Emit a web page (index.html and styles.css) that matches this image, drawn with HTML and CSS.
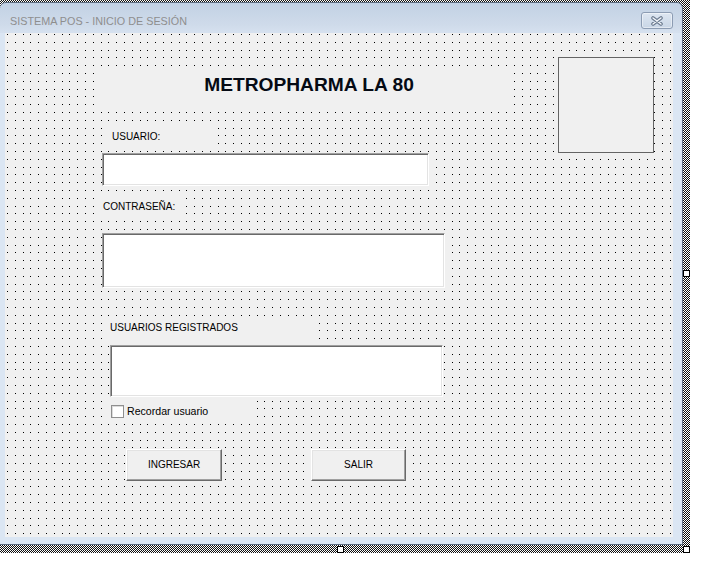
FILE: index.html
```html
<!DOCTYPE html>
<html lang="es">
<head>
<meta charset="utf-8">
<title>Sistema POS - Inicio de sesión</title>
<link rel="stylesheet" href="styles.css">
</head>
<body>
<div class="designer">
  <div class="window">
    <div class="titlebar">
      <span class="title">SISTEMA POS - INICIO DE SESIÓN</span>
      <span class="close">
        <svg width="14" height="10" viewBox="0 0 14 10">
          <path d="M3 2 L11 8 M11 2 L3 8" stroke="#6b7a8f" stroke-width="3.6" stroke-linecap="round" fill="none"/>
          <path d="M3 2 L11 8 M11 2 L3 8" stroke="#f4f7fb" stroke-width="1.4" stroke-linecap="round" fill="none"/>
        </svg>
      </span>
    </div>
    <div class="client">
      <div class="fields">
        <div class="lbl heading">METROPHARMA LA 80</div>
        <div class="lbl lbl-user">USUARIO:</div>
        <div class="textbox tb-user"></div>
        <div class="lbl lbl-pass">CONTRASEÑA:</div>
        <div class="textbox tb-pass"></div>
        <div class="lbl lbl-reg">USUARIOS REGISTRADOS</div>
        <div class="textbox tb-reg"></div>
        <div class="check">
          <span class="box"></span>
          <span class="check-text">Recordar usuario</span>
        </div>
        <div class="buttons">
          <div class="btn btn-in">INGRESAR</div>
          <div class="btn btn-out">SALIR</div>
        </div>
      </div>
      <div class="picture"></div>
    </div>
  </div>
  <span class="handle h-right"></span>
  <span class="handle h-bottom"></span>
  <span class="handle h-corner"></span>
</div>
</body>
</html>
```
FILE: styles.css
```css
html, body {
  margin: 0;
  padding: 0;
  background: #fff;
}

.designer {
  position: relative;
  width: 690px;
  height: 553px;
  box-sizing: border-box;
  padding-top: 2px;
  background-color: #fff;
  background-image: repeating-conic-gradient(#111 0 25%, #fff 0 50%);
  background-size: 2px 2px;
}

.window {
  width: 683px;
  height: 543px;
  box-sizing: border-box;
  border: 1px solid #5d6c80;
  border-left: none;
  border-radius: 6px 6px 0 0;
  background: linear-gradient(to bottom, #c2d1e4 0, #cfdbea 22px, #d6e1ef 30px, #dbe6f3 30px);
  display: flex;
  flex-direction: column;
  font-family: "Liberation Sans", Arial, sans-serif;
}

.titlebar {
  height: 30px;
  display: flex;
  justify-content: space-between;
  align-items: flex-start;
  padding: 0 9px 0 10px;
  box-sizing: border-box;
}

.title {
  padding-top: 12px;
  font-size: 10.8px;
  line-height: 13px;
  color: #8e8e8e;
}

.close {
  margin-top: 9px;
  width: 32px;
  height: 17px;
  box-sizing: border-box;
  border: 1px solid #8c9cb3;
  border-radius: 3px;
  background: linear-gradient(to bottom, #dde6f1, #c9d6e6);
  box-shadow: inset 0 0 0 1px rgba(255, 255, 255, 0.45);
  display: flex;
  align-items: center;
  justify-content: center;
}

.client {
  margin-left: 5px;
  width: 668px;
  height: 504px;
  display: flex;
  background-color: #f0f0f0;
  background-image:
    linear-gradient(to bottom, transparent 0 1px, #f0f0f0 1px 8px, transparent 8px 9px, #f0f0f0 9px 16px, transparent 16px 17px, #f0f0f0 17px 23px, transparent 23px 24px, #f0f0f0 24px 31px, transparent 31px 32px, #f0f0f0 32px 39px),
    linear-gradient(to right, #000 0 1px, transparent 1px 8px, #000 8px 9px, transparent 9px 16px, #000 16px 17px, transparent 17px 23px, #000 23px 24px, transparent 24px 31px, #000 31px 32px, transparent 32px 39px);
  background-size: 39px 39px;
  background-position: 2px 1px;
}

.fields {
  width: 553px;
  flex: none;
  display: flex;
  flex-direction: column;
  align-items: flex-start;
}

.lbl {
  background: #f0f0f0;
  font-size: 10px;
  line-height: 12px;
  color: #000;
  box-sizing: border-box;
  white-space: nowrap;
}

.heading {
  margin: 34px 0 0 95px;
  width: 410px;
  height: 43px;
  padding: 7px 0 0 8px;
  text-align: center;
  font-size: 19.2px;
  line-height: 22px;
  font-weight: bold;
  color: #050a14;
}

.lbl-user {
  margin: 15px 0 0 103px;
  width: 104px;
  height: 22px;
  padding: 6px 0 0 4px;
}

.lbl-pass {
  margin: 11px 0 0 95px;
  width: 86px;
  height: 21px;
  padding: 4px 0 0 3px;
}

.lbl-reg {
  margin: 28px 0 0 101px;
  width: 207px;
  height: 24px;
  padding: 6px 0 0 4px;
}

.textbox {
  background: #fff;
  box-sizing: border-box;
  border-top: 1px solid #a0a0a0;
  border-left: 1px solid #a0a0a0;
  border-right: 1px solid #fff;
  border-bottom: 1px solid #fff;
  box-shadow: inset 1px 1px 0 #696969, inset -1px -1px 0 #e3e3e3;
}

.tb-user {
  margin: 6px 0 0 97px;
  width: 327px;
  height: 33px;
}

.tb-pass {
  margin: 15px 0 0 97px;
  width: 343px;
  height: 55px;
}

.tb-reg {
  margin: 5px 0 0 105px;
  width: 333px;
  height: 52px;
}

.check {
  margin: 3px 0 0 103px;
  width: 145px;
  height: 22px;
  background: #f0f0f0;
  display: flex;
  align-items: center;
  box-sizing: border-box;
  padding-left: 3px;
}

.box {
  width: 13px;
  height: 13px;
  box-sizing: border-box;
  background: #fff;
  border: 1px solid #8f8f8f;
  box-shadow: inset 1px 1px 0 #dcdcdc;
}

.check-text {
  margin-left: 3px;
  font-size: 10.6px;
  line-height: 12px;
  color: #000;
}

.buttons {
  margin-top: 27px;
  display: flex;
}

.btn {
  height: 32px;
  box-sizing: border-box;
  background: #f0f0f0;
  border-top: 1px solid #fff;
  border-left: 1px solid #fff;
  border-right: 1px solid #696969;
  border-bottom: 1px solid #696969;
  box-shadow: inset -1px -1px 0 #a0a0a0, inset 1px 1px 0 #e3e3e3;
  font-size: 10px;
  line-height: 12px;
  display: flex;
  align-items: center;
  justify-content: center;
  color: #000;
}

.btn-in {
  margin-left: 121px;
  width: 96px;
}

.btn-out {
  margin-left: 89px;
  width: 95px;
}

.picture {
  margin-top: 24px;
  width: 96px;
  height: 96px;
  box-sizing: border-box;
  border: 1px solid #646464;
  background: #f0f0f0;
}

.handle {
  position: absolute;
  width: 7px;
  height: 7px;
  box-sizing: border-box;
  background: #fff;
  border: 1px solid #000;
}

.h-right {
  left: 683px;
  top: 270px;
}

.h-bottom {
  left: 337px;
  top: 546px;
}

.h-corner {
  left: 683px;
  top: 546px;
}
```
